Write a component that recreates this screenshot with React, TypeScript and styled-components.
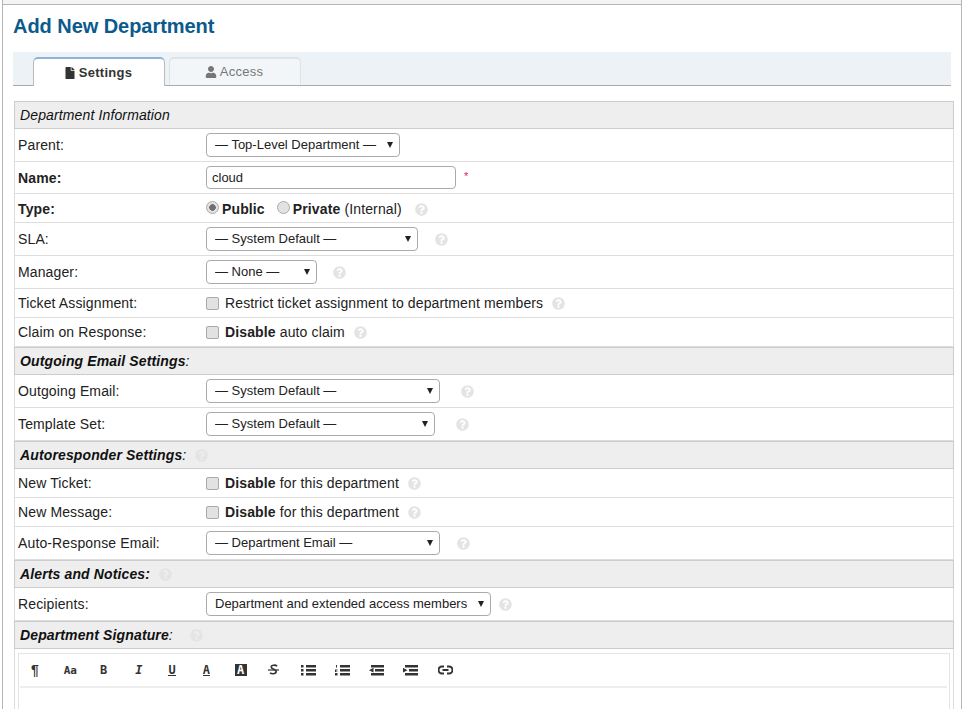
import React from "react";
import styled, { createGlobalStyle } from "styled-components";
import { FaFile, FaUser, FaQuestionCircle } from "react-icons/fa";

const Global = createGlobalStyle`
  html, body {
    margin: 0;
    padding: 0;
    height: 709px;
    overflow: hidden;
    background: #fff;
    font-family: "Liberation Sans", Arial, sans-serif;
    font-size: 14px;
    letter-spacing: 0.13px;
    color: #222;
  }
`;

const TopStrip = styled.div`
  height: 4px;
  margin: 0 2px;
  background: #f4f4f4;
  border-left: 1px solid #b5b5b5;
  border-right: 1px solid #b5b5b5;
`;

const Page = styled.div`
  margin: 0 2px;
  height: 704px;
  border: 1px solid #b5b5b5;
  border-bottom: none;
  padding: 0 10px;
  overflow: hidden;
`;

const Title = styled.h2`
  margin: 0;
  height: 47px;
  padding-top: 9px;
  box-sizing: border-box;
  font-size: 20px;
  line-height: 24px;
  letter-spacing: -0.05px;
  font-weight: bold;
  color: #0a5a8c;
`;

const TabBar = styled.div`
  display: flex;
  align-items: flex-end;
  height: 34px;
  width: 938px;
  padding-left: 20px;
  box-sizing: border-box;
  gap: 4px;
  background: #edf2f6;
  border-bottom: 1px solid #aaa;
`;

const Tab = styled.div<{ $active?: boolean }>`
  width: 132px;
  height: ${(p) => (p.$active ? "29px" : "28px")};
  margin-bottom: ${(p) => (p.$active ? "-1px" : "0")};
  padding-right: 2px;
  box-sizing: border-box;
  display: flex;
  align-items: center;
  justify-content: center;
  gap: 3px;
  font-size: 13px;
  letter-spacing: 0.25px;
  border-radius: 5px 5px 0 0;
  color: ${(p) => (p.$active ? "#333" : "#777")};
  font-weight: ${(p) => (p.$active ? "bold" : "normal")};
  background: ${(p) => (p.$active ? "#fff" : "#f3f6f8")};
  border: 1px solid ${(p) => (p.$active ? "#bbb" : "#dfe3e6")};
  border-top: 2px solid ${(p) => (p.$active ? "#8fb4d9" : "#dfe3e6")};
  border-bottom: ${(p) => (p.$active ? "none" : "1px solid transparent")};
  svg {
    font-size: 12px;
  }
`;

const Form = styled.div`
  margin: 15px 0 0 1px;
  width: 938px;
  border-left: 1px solid #ddd;
  border-right: 1px solid #ddd;
`;

const Header = styled.div<{ $plain?: boolean }>`
  height: 28px;
  box-sizing: border-box;
  margin: 0 -1px;
  display: flex;
  align-items: center;
  gap: 9px;
  padding-left: 5px;
  background: #eee;
  border: 1px solid #ccc;
  font-style: italic;
  font-weight: ${(p) => (p.$plain ? "normal" : "bold")};
  color: #111;
`;

const PlainColon = styled.span`
  font-weight: normal;
`;

const Row = styled.div<{ $h: number; $low?: boolean }>`
  height: ${(p) => p.$h}px;
  box-sizing: border-box;
  display: flex;
  align-items: center;
  padding-top: ${(p) => (p.$low ? "2px" : "0")};
  border-bottom: 1px solid #ddd;
`;

const Label = styled.div<{ $bold?: boolean }>`
  width: 191px;
  padding-left: 3px;
  box-sizing: border-box;
  flex: none;
  font-weight: ${(p) => (p.$bold ? "bold" : "normal")};
`;

const Field = styled.div`
  display: flex;
  align-items: center;
`;

const SelectWrap = styled.div`
  position: relative;
  display: flex;
  &::after {
    content: "";
    position: absolute;
    right: 7px;
    top: 9px;
    border-left: 3.5px solid transparent;
    border-right: 3.5px solid transparent;
    border-top: 6px solid #222;
    pointer-events: none;
  }
`;

const SelectBox = styled.select<{ $w: number }>`
  appearance: none;
  width: ${(p) => p.$w}px;
  height: 24px;
  box-sizing: border-box;
  padding: 0 8px 2px;
  background-color: #fff;
  border: 1px solid #aaa;
  border-radius: 4px;
  font-family: inherit;
  font-size: 13px;
  color: #222;
`;

const TextInput = styled.input`
  width: 250px;
  height: 23px;
  box-sizing: border-box;
  padding: 0 5px;
  border: 1px solid #aaa;
  border-radius: 4px;
  font-family: inherit;
  font-size: 13px;
  color: #222;
`;

const Required = styled.span`
  color: #e0245e;
  font-size: 11px;
  margin-left: 8px;
  position: relative;
  top: -2px;
`;

const Check = styled.span`
  width: 13px;
  height: 13px;
  box-sizing: border-box;
  flex: none;
  margin-right: 6px;
  background: #e2e2e2;
  border: 1px solid #aaa;
  border-radius: 2px;
`;

const Radio = styled.span<{ $on?: boolean }>`
  width: 13px;
  height: 13px;
  box-sizing: border-box;
  flex: none;
  margin-right: 3px;
  position: relative;
  top: -2px;
  border-radius: 50%;
  border: 1px solid #aaa;
  background: ${(p) => (p.$on ? "radial-gradient(circle, #707070 0 3px, #e2e2e2 3.6px)" : "#e2e2e2")};
`;

const RadioLabel = styled.span`
  margin-right: 12px;
`;

const Help = styled(FaQuestionCircle)<{ $ml: number }>`
  flex: none;
  color: #e4e4e4;
  font-size: 13px;
  margin-left: ${(p) => p.$ml}px;
`;

const Editor = styled.div`
  margin: 4px 3px 0 3px;
  height: 60px;
  border: 1px solid #e4e4e4;
  border-bottom: none;
`;

const Toolbar = styled.div`
  height: 32px;
  margin: 0 2px 0 1px;
  display: flex;
  align-items: center;
  gap: 14.25px;
  padding-left: 4px;
  border-bottom: 2px solid #eee;
`;

const Tool = styled.span`
  width: 20px;
  flex: none;
  display: flex;
  justify-content: center;
  align-items: center;
  color: #333;
`;

const TextTool = styled(Tool)<{ $shift?: number }>`
  box-sizing: border-box;
  padding-left: ${(p) => p.$shift ?? 2}px;
  font-family: "DejaVu Sans Mono", "Liberation Mono", monospace;
  font-size: 12px;
  letter-spacing: 0;
  font-weight: bold;
`;

const PilcrowTool = styled(TextTool)`
  font-family: "Liberation Sans", sans-serif;
  font-size: 14px;
`;

const SmallTool = styled(TextTool)`
  font-size: 11px;
`;

const Underlined = styled.span`
  border-bottom: 1.5px solid #333;
  line-height: 10px;
`;

const Inverted = styled.span`
  background: #333;
  color: #fff;
  width: 12px;
  height: 12px;
  display: flex;
  align-items: center;
  justify-content: center;
`;

const Select = ({ w, text }: { w: number; text: string }) => (
  <SelectWrap>
    <SelectBox $w={w}><option>{text}</option></SelectBox>
  </SelectWrap>
);

const Bars = ({ d }: { d: string }) => (
  <svg width="15" height="11" viewBox="0 0 15 11" fill="#333">
    <path d={d} />
  </svg>
);

export default function App() {
  return (
    <>
      <Global />
      <TopStrip />
      <Page>
        <Title>Add New Department</Title>
        <TabBar>
          <Tab $active><FaFile /> Settings</Tab>
          <Tab><FaUser /> Access</Tab>
        </TabBar>
        <Form>
          <Header $plain>Department Information</Header>
          <Row $h={33}>
            <Label>Parent:</Label>
            <Field><Select w={194} text="— Top-Level Department —" /></Field>
          </Row>
          <Row $h={32}>
            <Label $bold>Name:</Label>
            <Field><TextInput defaultValue="cloud" /><Required>*</Required></Field>
          </Row>
          <Row $h={29} $low>
            <Label $bold>Type:</Label>
            <Field>
              <Radio $on /><RadioLabel><b>Public</b></RadioLabel>
              <Radio /><span><b>Private</b> (Internal)</span>
              <Help $ml={13} />
            </Field>
          </Row>
          <Row $h={33}>
            <Label>SLA:</Label>
            <Field><Select w={212} text="— System Default —" /><Help $ml={17} /></Field>
          </Row>
          <Row $h={33}>
            <Label>Manager:</Label>
            <Field><Select w={111} text="— None —" /><Help $ml={16} /></Field>
          </Row>
          <Row $h={29}>
            <Label>Ticket Assignment:</Label>
            <Field><Check />Restrict ticket assignment to department members<Help $ml={9} /></Field>
          </Row>
          <Row $h={29}>
            <Label>Claim on Response:</Label>
            <Field><Check /><span><b>Disable</b> auto claim</span><Help $ml={9} /></Field>
          </Row>
          <Header><span>Outgoing Email Settings<PlainColon>:</PlainColon></span></Header>
          <Row $h={33}>
            <Label>Outgoing Email:</Label>
            <Field><Select w={234} text="— System Default —" /><Help $ml={21} /></Field>
          </Row>
          <Row $h={33}>
            <Label>Template Set:</Label>
            <Field><Select w={229} text="— System Default —" /><Help $ml={21} /></Field>
          </Row>
          <Header><span>Autoresponder Settings<PlainColon>:</PlainColon></span><Help $ml={0} /></Header>
          <Row $h={29}>
            <Label>New Ticket:</Label>
            <Field><Check /><span><b>Disable</b> for this department</span><Help $ml={9} /></Field>
          </Row>
          <Row $h={29}>
            <Label>New Message:</Label>
            <Field><Check /><span><b>Disable</b> for this department</span><Help $ml={9} /></Field>
          </Row>
          <Row $h={33}>
            <Label>Auto-Response Email:</Label>
            <Field><Select w={234} text="— Department Email —" /><Help $ml={17} /></Field>
          </Row>
          <Header>Alerts and Notices:<Help $ml={0} /></Header>
          <Row $h={33}>
            <Label>Recipients:</Label>
            <Field><Select w={285} text="Department and extended access members" /><Help $ml={8} /></Field>
          </Row>
          <Header><span>Department Signature<PlainColon>:</PlainColon></span><Help $ml={8} /></Header>
          <Editor>
            <Toolbar>
              <PilcrowTool>¶</PilcrowTool>
              <SmallTool $shift={4}>Aa</SmallTool>
              <TextTool>B</TextTool>
              <TextTool $shift={4}><i>I</i></TextTool>
              <TextTool><Underlined>U</Underlined></TextTool>
              <TextTool><Underlined>A</Underlined></TextTool>
              <TextTool><Inverted>A</Inverted></TextTool>
              <Tool>
                <svg width="13" height="12" viewBox="0 0 13 12" fill="none" stroke="#333" strokeWidth="1.6">
                  <path d="M10 2.2C9 .8 4.2.6 4.2 3c0 1.2 1.6 2 3 2.6 1.4.6 2.4 1.4 1.8 2.8-.6 1.6-4.4 1.8-6 .4" />
                  <path d="M1 6h11" strokeWidth="1.2" />
                </svg>
              </Tool>
              <Tool><Bars d="M0 0h2.5v2.5H0zM0 4h2.5v2.5H0zM0 8h2.5v2.5H0zM5 0h10v2.5H5zM5 4h10v2.5H5zM5 8h10v2.5H5z" /></Tool>
              <Tool><Bars d="M1 0h1v2.5H1zM0 4.5h2.5v1H1v1h1.5V7H0zM0 8h2.5v2.5H0zM5 0h10v2.5H5zM5 4h10v2.5H5zM5 8h10v2.5H5z" /></Tool>
              <Tool><Bars d="M2 0h13v2.5H2zM6 4h9v2.5H6zM2 8h13v2.5H2zM0 5.2 4.5 2.8v4.8z" /></Tool>
              <Tool><Bars d="M2 0h13v2.5H2zM6 4h9v2.5H6zM2 8h13v2.5H2zM4.5 5.2 0 2.8v4.8z" /></Tool>
              <Tool>
                <svg width="15" height="10" viewBox="0 0 15 10" fill="none" stroke="#333" strokeWidth="2">
                  <path d="M6 1.5H4a3.5 3.5 0 0 0 0 7h2M9 1.5h2a3.5 3.5 0 0 1 0 7H9M4.5 5h6" />
                </svg>
              </Tool>
            </Toolbar>
          </Editor>
        </Form>
      </Page>
    </>
  );
}
